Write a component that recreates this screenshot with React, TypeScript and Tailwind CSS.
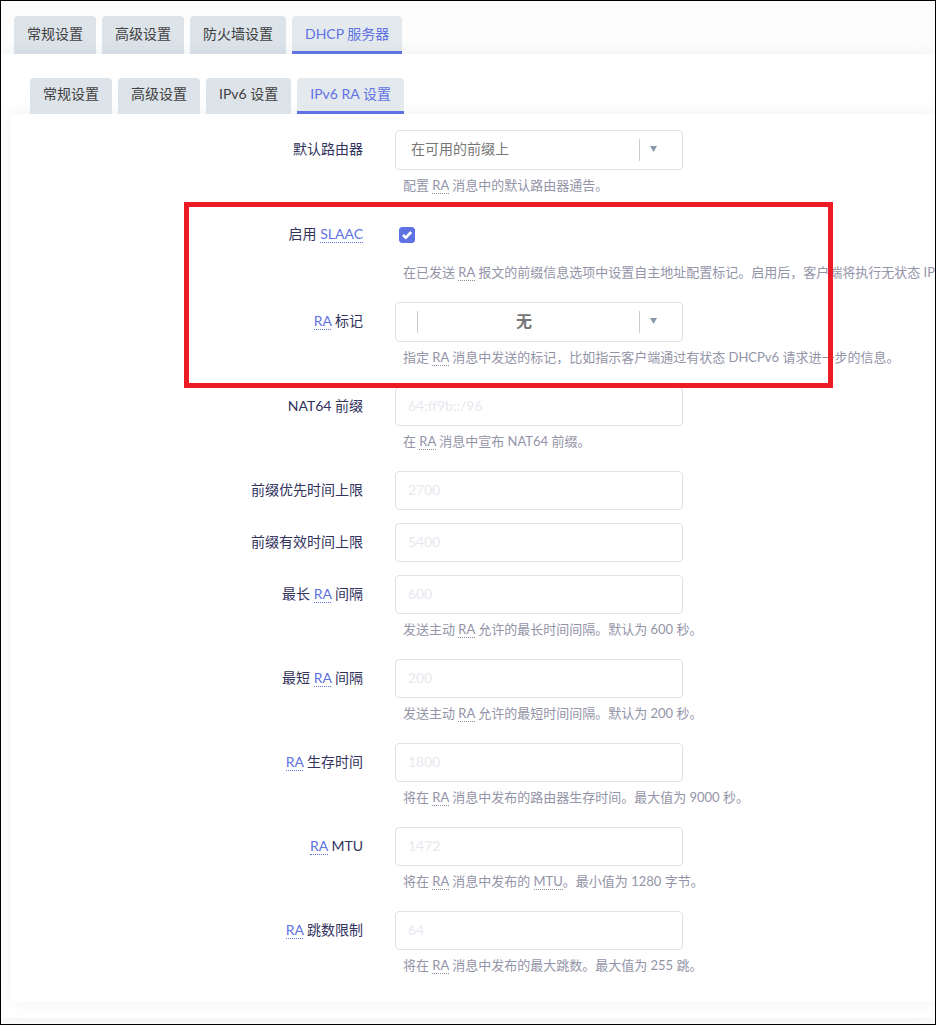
import { ReactNode, useState } from 'react';
import clsx from 'clsx';

interface TabsProps {
    tabs: string[];
    active: string;
    onSelect: (tab: string) => void;
    label: string;
    className: string;
    tabClassName: string;
}

function Tabs({ tabs, active, onSelect, label, className, tabClassName }: TabsProps) {
    return (
        <nav aria-label={label} className={clsx('flex gap-1.5', className)}>
            {tabs.map((tab) => (
                <a
                    key={tab}
                    href="#"
                    onClick={(e) => {
                        e.preventDefault();
                        onSelect(tab);
                    }}
                    className={clsx(
                        'rounded-t border-b-3 text-sm whitespace-nowrap',
                        tabClassName,
                        tab === active
                            ? 'border-[#5e72e4] bg-[#e4e9ed] text-[#5e72e4]'
                            : 'border-[#dce3e9] bg-[#dce3e9] text-[#404040]'
                    )}
                >
                    {tab}
                </a>
            ))}
        </nav>
    );
}

// Term inside a label, links to the docs
function Term({ children }: { children: ReactNode }) {
    return (
        <a href="#" className="border-b border-dotted border-[#5e72e4] text-[#5e72e4]">
            {children}
        </a>
    );
}

function Abbr({ children }: { children: ReactNode }) {
    return <abbr className="border-b border-dotted border-[#8c8ca0] no-underline">{children}</abbr>;
}

interface RowProps {
    id: string;
    label: ReactNode;
    help?: ReactNode;
    children: ReactNode;
}

function Row({ id, label, help, children }: RowProps) {
    return (
        <div className="flex gap-8">
            <label htmlFor={id} className="w-88 shrink-0 text-right text-sm leading-[38px] text-[#32325d]">
                {label}
            </label>
            <div className="min-w-0 flex-1">
                {children}
                {help && <div className="pb-px pl-2 text-[13px] leading-[31px] whitespace-nowrap text-[#9494a8]">{help}</div>}
            </div>
        </div>
    );
}

function TextField({ id, placeholder }: { id: string; placeholder: string }) {
    return (
        <input
            id={id}
            type="text"
            placeholder={placeholder}
            className="block h-[39px] w-72 rounded border border-[#dee2e6] bg-white px-3 pb-0.5 text-sm text-[#8898aa] outline-none placeholder:text-[#e6e9ee] focus:border-[#5e72e4]"
        />
    );
}

interface SelectFieldProps {
    id: string;
    options: string[];
    multiple?: boolean;
}

function SelectField({ id, options, multiple }: SelectFieldProps) {
    return (
        <div className="relative w-72">
            <select
                id={id}
                className={clsx(
                    'block h-10 w-full appearance-none rounded border border-[#dee2e6] bg-white pr-[45px] pb-0.5 pl-[15px] text-[#777] outline-none',
                    multiple ? 'text-center text-base font-bold' : 'text-sm'
                )}
            >
                {options.map((o) => (
                    <option key={o}>{o}</option>
                ))}
            </select>
            {multiple && <span className="pointer-events-none absolute top-[9px] left-[22px] h-[22px] w-px bg-[#ccc]" />}
            <span className="pointer-events-none absolute top-[9px] right-[43px] h-[22px] w-px bg-[#ccc]" />
            <svg className="pointer-events-none absolute top-4 right-[26px]" width="7" height="6" viewBox="0 0 7 6">
                <path d="M0 0h7L3.5 6z" fill="#8898aa" />
            </svg>
        </div>
    );
}

export default function App() {
    const [mainTab, setMainTab] = useState('DHCP 服务器');
    const [subTab, setSubTab] = useState('IPv6 RA 设置');
    const [slaac, setSlaac] = useState(true);

    return (
        <div className="relative flex min-h-screen flex-col overflow-hidden border border-black bg-[#fdfdfd] pb-1.5 font-[Lato,'Noto_Sans_CJK_SC',sans-serif]">
            <Tabs
                label="接口"
                tabs={['常规设置', '高级设置', '防火墙设置', 'DHCP 服务器']}
                active={mainTab}
                onSelect={setMainTab}
                className="pt-[15px] pl-[13px]"
                tabClassName="h-[38px] px-[13px] leading-[35px]"
            />
            <div className="grow bg-white pb-4 pl-2.5 shadow-[0_0_16px_rgba(136,152,170,0.15)]">
                <Tabs
                    label="DHCP"
                    tabs={['常规设置', '高级设置', 'IPv6 设置', 'IPv6 RA 设置']}
                    active={subTab}
                    onSelect={setSubTab}
                    className="pt-6 pl-[19px]"
                    tabClassName="h-9 px-[13px] leading-8"
                />
                <form className="flex flex-col gap-[13px] rounded-l bg-white pt-4 pb-5 shadow-[0_0_16px_rgba(136,152,170,0.15)]">
                    <Row id="default-router" label="默认路由器" help={<>配置 <Abbr>RA</Abbr> 消息中的默认路由器通告。</>}>
                        <SelectField id="default-router" options={['在可用的前缀上', '自动', '强制']} />
                    </Row>
                    <Row
                        id="slaac"
                        label={<>启用 <Term>SLAAC</Term></>}
                        help={<>在已发送 <Abbr>RA</Abbr> 报文的前缀信息选项中设置自主地址配置标记。启用后，客户端将执行无状态 IPv6</>}
                    >
                        <div className="flex h-[42px] items-center pb-0.5 pl-1">
                            <div className="relative size-4">
                                <input
                                    id="slaac"
                                    type="checkbox"
                                    checked={slaac}
                                    onChange={(e) => setSlaac(e.target.checked)}
                                    className="block size-4 appearance-none rounded-[3px] border border-[#dee2e6] checked:border-[#5e72e4] checked:bg-[#5e72e4]"
                                />
                                {slaac && (
                                    <svg className="pointer-events-none absolute inset-0" width="16" height="16" viewBox="0 0 16 16">
                                        <path d="M4 8l2.8 2.7L12.2 5" fill="none" stroke="#fff" strokeWidth="2.6" />
                                    </svg>
                                )}
                            </div>
                        </div>
                    </Row>
                    <Row
                        id="ra-flags"
                        label={<><Term>RA</Term> 标记</>}
                        help={<>指定 <Abbr>RA</Abbr> 消息中发送的标记，比如指示客户端通过有状态 DHCPv6 请求进一步的信息。</>}
                    >
                        <SelectField id="ra-flags" options={['无']} multiple />
                    </Row>
                    <Row id="nat64" label="NAT64 前缀" help={<>在 <Abbr>RA</Abbr> 消息中宣布 NAT64 前缀。</>}>
                        <TextField id="nat64" placeholder="64:ff9b::/96" />
                    </Row>
                    <Row id="preferred" label="前缀优先时间上限">
                        <TextField id="preferred" placeholder="2700" />
                    </Row>
                    <Row id="valid" label="前缀有效时间上限">
                        <TextField id="valid" placeholder="5400" />
                    </Row>
                    <Row
                        id="max-interval"
                        label={<>最长 <Term>RA</Term> 间隔</>}
                        help={<>发送主动 <Abbr>RA</Abbr> 允许的最长时间间隔。默认为 600 秒。</>}
                    >
                        <TextField id="max-interval" placeholder="600" />
                    </Row>
                    <Row
                        id="min-interval"
                        label={<>最短 <Term>RA</Term> 间隔</>}
                        help={<>发送主动 <Abbr>RA</Abbr> 允许的最短时间间隔。默认为 200 秒。</>}
                    >
                        <TextField id="min-interval" placeholder="200" />
                    </Row>
                    <Row
                        id="lifetime"
                        label={<><Term>RA</Term> 生存时间</>}
                        help={<>将在 <Abbr>RA</Abbr> 消息中发布的路由器生存时间。最大值为 9000 秒。</>}
                    >
                        <TextField id="lifetime" placeholder="1800" />
                    </Row>
                    <Row
                        id="mtu"
                        label={<><Term>RA</Term> MTU</>}
                        help={<>将在 <Abbr>RA</Abbr> 消息中发布的 <Abbr>MTU</Abbr>。最小值为 1280 字节。</>}
                    >
                        <TextField id="mtu" placeholder="1472" />
                    </Row>
                    <Row
                        id="hop-limit"
                        label={<><Term>RA</Term> 跳数限制</>}
                        help={<>将在 <Abbr>RA</Abbr> 消息中发布的最大跳数。最大值为 255 跳。</>}
                    >
                        <TextField id="hop-limit" placeholder="64" />
                    </Row>
                </form>
            </div>
            {/* red marker around the SLAAC and RA flags rows */}
            <div className="pointer-events-none absolute top-[201px] left-[183px] h-[186px] w-[649px] border-5 border-[#ed1c24]" />
        </div>
    );
}
